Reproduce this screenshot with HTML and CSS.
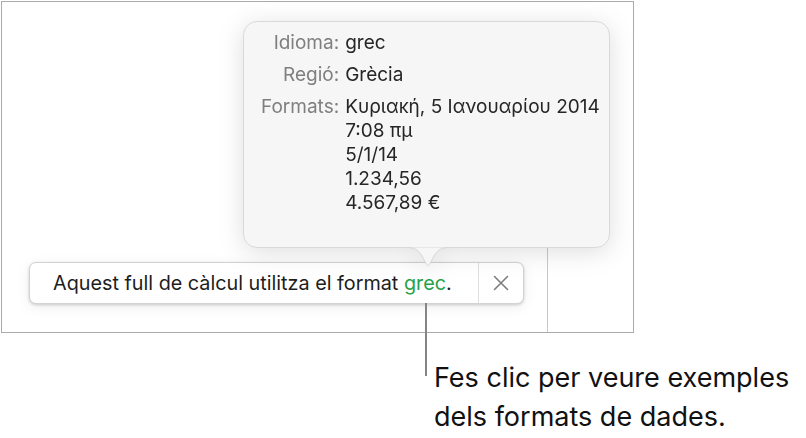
FILE: index.html
```html
<!DOCTYPE html>
<html lang="ca">
<head>
<meta charset="utf-8">
<link rel="stylesheet" href="styles.css">
</head>
<body>
<div class="frame">
  <div class="col-line"></div>
  <div class="banner">
    <div class="banner-text">Aquest full de càlcul utilitza el format <span class="green">grec</span>.</div>
    <div class="banner-close">
      <svg width="16" height="16" viewBox="0 0 16 16"><path d="M1.5 1.5 L14.5 14.5 M14.5 1.5 L1.5 14.5" stroke="#7d7d7d" stroke-width="1.6" fill="none" stroke-linecap="round"/></svg>
    </div>
  </div>
  <div class="popover">
    <div class="pop-grid">
      <div class="lbl">Idioma:</div><div class="val">grec</div>
      <div class="lbl">Regió:</div><div class="val">Grècia</div>
      <div class="lbl">Formats:</div><div class="val">Κυριακή, 5 Ιανουαρίου 2014<br>7:08 πμ<br>5/1/14<br>1.234,56<br>4.567,89 €</div>
    </div>
    <svg class="arrow" width="44" height="21" viewBox="0 0 44 21"><path d="M0 0.5 C8 0.5 12 2 16 9 L20.5 17.5 Q22 20 23.5 17.5 L28 9 C32 2 36 0.5 44 0.5" fill="#f6f6f6" stroke="#d6d6d6" stroke-width="1"/></svg>
  </div>
</div>
<div class="callout">
  <div class="callout-text">Fes clic per veure exemples<br>dels formats de dades.</div>
</div>
</body>
</html>
```
FILE: styles.css
```css
html, body {
  margin: 0;
  padding: 0;
  background: #ffffff;
}
body {
  font-family: Inter, "Liberation Sans", Arial, sans-serif;
  color: #1e1e1e;
  width: 806px;
  height: 438px;
  overflow: hidden;
}
.frame {
  position: relative;
  box-sizing: border-box;
  margin: 1px 0 0 1px;
  width: 633px;
  height: 332px;
  border: 1px solid #ababab;
  background: #fff;
}
.col-line {
  position: absolute;
  left: 545px;
  top: 244px;
  bottom: 0;
  width: 1px;
  background: #c9c9c9;
}
.banner {
  position: absolute;
  left: 27px;
  top: 260px;
  width: 495px;
  height: 42px;
  box-sizing: border-box;
  display: flex;
  align-items: stretch;
  background: #fff;
  border: 1px solid #d3d3d3;
  border-radius: 7px;
  box-shadow: 0 1px 3px rgba(0,0,0,0.18), 0 3px 14px rgba(0,0,0,0.07);
}
.banner-text {
  flex: 1;
  padding-left: 23px;
  font-size: 19.8px;
  line-height: 40px;
  color: #1d1d1d;
  white-space: nowrap;
}
.green { color: #27a347; }
.banner-close {
  width: 44px;
  border-left: 1px solid #dedede;
  display: flex;
  align-items: center;
  justify-content: center;
}
.popover {
  position: absolute;
  left: 241px;
  top: 19px;
  width: 367px;
  height: 227px;
  box-sizing: border-box;
  background: #f6f6f6;
  border: 1px solid #d9d9d9;
  border-radius: 14px;
  padding: 9px 0 0 17px;
  filter: drop-shadow(0 4px 12px rgba(0,0,0,0.13));
  z-index: 2;
}
.pop-grid {
  display: grid;
  grid-template-columns: auto auto;
  justify-content: start;
  column-gap: 6px;
  row-gap: 8px;
  font-size: 19px;
  line-height: 24px;
}
.lbl {
  text-align: right;
  color: #7f7f7f;
}
.val {
  color: #262626;
}
.arrow {
  position: absolute;
  left: 162px;
  bottom: -21px;
}
.callout {
  position: relative;
  padding: 25px 0 0 434px;
}
.callout::before {
  content: "";
  position: absolute;
  left: 425px;
  top: -30px;
  width: 2px;
  height: 73px;
  background: #858585;
}
.callout-text {
  font-size: 27px;
  line-height: 39px;
  color: #111;
  white-space: nowrap;
}
```
